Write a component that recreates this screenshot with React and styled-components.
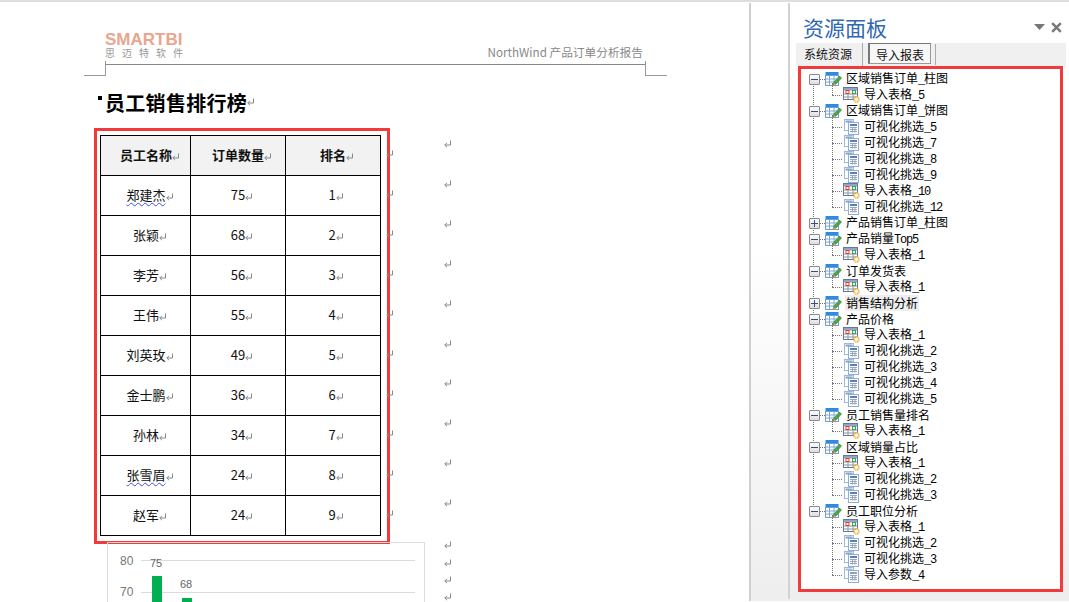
import React from 'react';
import styled, { createGlobalStyle } from 'styled-components';

const cjk = `"Noto Sans CJK SC", "Liberation Sans", sans-serif`;

const GlobalStyle = createGlobalStyle`
  html, body { margin: 0; padding: 0; background: #fff; overflow: hidden; }
  body { font-family: ${cjk}; }
`;

const Page = styled.div`
  width: 1069px;
  height: 602px;
  display: flex;
  overflow: hidden;
  box-sizing: border-box;
  padding-top: 3px;
  position: relative;
  &::before {
    content: '';
    position: absolute;
    left: 0;
    right: 0;
    top: 0;
    height: 2px;
    background: #dedede;
  }
`;

/* ---------- document side ---------- */
const Doc = styled.main`
  width: 749px;
  flex: none;
  background: #fff;
  padding: 27px 0 0 84px;
  box-sizing: border-box;
`;

const DocHeader = styled.header`
  width: 540px;
  margin-left: 21px;
  height: 34px;
  border-bottom: 1px solid #888;
  display: flex;
  justify-content: space-between;
  align-items: flex-end;
  position: relative;
`;

const CropMark = styled.i`
  position: absolute;
  top: 31px;
  ${(p) => (p.$side === 'left' ? 'left: -21px;' : 'right: -22px;')}
  width: 21px;
  height: 14px;
  border-bottom: 1px solid #999;
  ${(p) => (p.$side === 'left' ? 'border-right' : 'border-left')}: 1px solid #999;
`;

const Logo = styled.div`
  display: flex;
  flex-direction: column;
  margin-bottom: 6px;
`;

const LogoMark = styled.span`
  font-family: "Liberation Sans", sans-serif;
  font-size: 17px;
  line-height: 15px;
  font-weight: 700;
  letter-spacing: 0;
  color: #e9a58e;
`;

const LogoSub = styled.span`
  font-size: 10px;
  line-height: 11px;
  letter-spacing: 7px;
  color: #999;
  white-space: nowrap;
`;

const ReportName = styled.div`
  font-size: 11.7px;
  line-height: 14px;
  color: #888;
  margin-bottom: 5px;
  margin-right: 2px;
  white-space: nowrap;
`;

const Title = styled.h1`
  margin: 23px 0 0 14px;
  display: flex;
  align-items: center;
  height: 28px;
  font-size: 20px;
  letter-spacing: 0.3px;
  font-weight: 700;
  color: #000;
`;

const Bullet = styled.i`
  width: 4px;
  height: 4px;
  margin: -8px 3px 0 0;
  background: #000;
`;

const Body = styled.div`
  display: flex;
  margin: 12px 0 0 10px;
`;

const Report = styled.div`
  width: 296px;
  flex: none;
`;

const RedBox = styled.div`
  border: 3px solid #f33a3a;
  box-sizing: border-box;
`;

const TableBox = styled(RedBox)`
  width: 296px;
  height: 416px;
  padding: 4px 0 0 3px;
`;

const Table = styled.table`
  border-collapse: collapse;
  table-layout: fixed;
  width: 280px;
  font-size: 13px;
  color: #111;
`;

const Th = styled.th`
  height: 37px;
  padding: 0 0 2px ${(p) => p.$pad || 0}px;
  border: 1px solid #000;
  background: #f2f2f2;
  font-weight: 700;
  text-align: center;
  position: relative;
`;

const Td = styled.td`
  height: 37px;
  padding: 0 0 2px ${(p) => p.$pad || 0}px;
  border: 1px solid #000;
  text-align: center;
  position: relative;
`;

const Wavy = styled.span`
  text-decoration: ${(p) => (p.$wavy ? 'underline wavy #3f4fe0 1px' : 'none')};
  text-underline-offset: 2px;
`;

const RowEnd = styled.span`
  position: absolute;
  right: -14px;
  top: 50%;
  margin-top: -6px;
  display: flex;
`;

const MarkIcon = styled.svg`
  width: 8px;
  height: 8px;
  flex: none;
  vertical-align: -1px;
  color: #888;
`;

const ReturnMark = () => (
  <MarkIcon viewBox="0 0 8 8" fill="none" stroke="currentColor" strokeWidth="1">
    <path d="M6.5 0.5V5H0.8M3 2.8L0.8 5L3 7.2" />
  </MarkIcon>
);

const Marks = styled.div`
  margin: 12px 0 0 54px;
  display: flex;
  flex-direction: column;
`;

const MarkRow = styled.div`
  height: ${(p) => p.$h}px;
  display: flex;
  align-items: flex-start;
`;

const ChartFrame = styled.div`
  margin: -2px 0 0 13px;
  width: 316px;
  height: 70px;
  border: 1px solid #ddd;
  box-sizing: content-box;
`;

const Chart = () => (
  <svg width="316" height="70" viewBox="0 0 316 70" style={{ display: 'block' }}>
    <g stroke="#dcdcdc">
      <line x1="33" x2="307" y1="17.5" y2="17.5" />
      <line x1="33" x2="307" y1="49.5" y2="49.5" />
    </g>
    <g fontFamily="Liberation Sans, sans-serif" fontSize="12" fill="#777">
      <text x="12" y="22">80</text>
      <text x="12" y="53">70</text>
    </g>
    <g fontFamily="Liberation Sans, sans-serif" fontSize="11" fill="#666">
      <text x="42" y="24">75</text>
      <text x="72" y="45">68</text>
    </g>
    <rect x="44" y="33" width="10" height="40" fill="#00b050" />
    <rect x="74" y="55" width="10" height="20" fill="#00b050" />
  </svg>
);

/* ---------- resource panel ---------- */
const Dock = styled.aside`
  flex: 1;
  display: flex;
  border-left: 2px solid #cfcfcf;
  background: linear-gradient(#fff 0%, #fff 40%, #eee 100%);
  margin-bottom: 1px;
`;

const Panel = styled.section`
  margin-left: 37px;
  margin-bottom: 2px;
  flex: 1;
  display: flex;
  flex-direction: column;
  border-left: 2px solid #d2d2d2;
  padding: 8px 3px 0 6px;
`;

const PanelHead = styled.div`
  height: 32px;
  display: flex;
  align-items: center;
  padding: 0 4px 0 7px;
`;

const PanelTitle = styled.h2`
  flex: 1;
  margin: 0;
  font-size: 21px;
  font-weight: 400;
  line-height: 32px;
  color: #2f68b3;
`;

const PanelTool = styled.svg`
  display: block;
  margin-left: ${(p) => p.$gap || 0}px;
  color: #777;
`;

const Tabs = styled.div`
  height: 24px;
  display: flex;
  align-items: flex-start;
  background: #f0f0f0;
  font-size: 12px;
  color: #111;
`;

const Tab = styled.div`
  height: 21px;
  line-height: 22px;
  padding: 0 ${(p) => (p.$active ? '6px' : '10px')} 0 ${(p) => (p.$active ? '6px' : '8px')};
  box-sizing: border-box;
  margin-right: ${(p) => (p.$active ? '5px' : '6px')};
  position: relative;
  ${(p) => (p.$active
    ? `border: 1px solid #999; border-top-color: #777; border-left: 2px solid #777; background: #f7f7f7;`
    : '')}
  &::after {
    content: '';
    position: absolute;
    top: 0;
    bottom: -2px;
    right: ${(p) => (p.$active ? '-6px' : '-1px')};
    width: 1px;
    background: #aaa;
  }
`;

const TreeBox = styled(RedBox)`
  margin: -1px 3px 0 2px;
  height: 526px;
  background: #fff;
  padding-top: 2px;
  font-size: 12px;
  color: #000;
  overflow: hidden;
`;

const Node = styled.div`
  position: relative;
  &::before {
    content: '';
    display: ${(p) => (p.$last ? 'none' : 'block')};
    position: absolute;
    left: 12px;
    top: 8px;
    bottom: -8px;
    border-left: 1px dotted #777;
  }
`;

const RootRow = styled.div`
  height: 16px;
  display: flex;
  align-items: center;
  padding-left: 8px;
  white-space: nowrap;
`;

const Expander = styled.i`
  width: 9px;
  height: 9px;
  flex: none;
  border: 1px solid #8a8a8a;
  border-radius: 1px;
  box-sizing: content-box;
  background: linear-gradient(#fff, #ddd);
  position: relative;
  z-index: 1;
  &::before {
    content: '';
    position: absolute;
    left: 1px;
    right: 1px;
    top: 4px;
    height: 1px;
    background: #3b4f7c;
  }
  &::after {
    content: '';
    display: ${(p) => (p.$closed ? 'block' : 'none')};
    position: absolute;
    top: 1px;
    bottom: 1px;
    left: 4px;
    width: 1px;
    background: #3b4f7c;
  }
`;

const Dash = styled.i`
  width: 5px;
  flex: none;
  border-top: 1px dotted #777;
`;

const Children = styled.div`
  position: relative;
  &::before {
    content: '';
    position: absolute;
    left: 31px;
    top: -4px;
    bottom: 8px;
    border-left: 1px dotted #777;
  }
`;

const ChildRow = styled.div`
  height: 16px;
  display: flex;
  align-items: center;
  padding-left: 42px;
  white-space: nowrap;
  position: relative;
  &::before {
    content: '';
    position: absolute;
    left: 31px;
    width: 10px;
    top: 8px;
    border-top: 1px dotted #777;
  }
`;

const Label = styled.span`
  margin-left: ${(p) => p.$gap}px;
  padding: 0 1px;
  line-height: 16px;
  background: ${(p) => (p.$selected ? '#eee' : 'transparent')};
`;

const Latin = styled.span`
  font-family: "Liberation Mono", monospace;
  font-size: 12px;
  letter-spacing: -1.2px;
`;

const LabelText = ({ text }) =>
  text.split(/([A-Za-z0-9_]+)/).map((part, i) =>
    /^[A-Za-z0-9_]+$/.test(part) ? <Latin key={i}>{part}</Latin> : part
  );

const ReportIcon = () => (
  <svg width="17" height="16" viewBox="0 0 17 16" style={{ flex: 'none', display: 'block' }}>
    <rect x="0.5" y="1" width="13" height="4" fill="#2b8ae2" />
    <rect x="0.5" y="4.5" width="13" height="10" fill="#fff" stroke="#6f9fd6" />
    <path d="M4.5 5v9M9 5v9M1 8h12M1 11h12" stroke="#7fa6d2" fill="none" />
    <path d="M8 14.5l1-3.5 5.5-6 2 2-5.5 6z" fill="#4ea845" stroke="#2f7a2c" strokeWidth="0.6" />
    <path d="M8 15l.8-3 2.1 2z" fill="#e0a050" />
  </svg>
);

const ImportIcon = () => (
  <svg width="17" height="16" viewBox="0 0 17 16" style={{ flex: 'none', display: 'block' }}>
    <rect x="0.5" y="0.5" width="14" height="12" fill="#fff" stroke="#6a7890" />
    <rect x="1" y="1" width="13" height="2.5" fill="#8ea6cc" />
    <path d="M5 3v9M10 3v9M1 7h13M1 10h13" stroke="#8a96aa" fill="none" />
    <rect x="3" y="3.5" width="3" height="3" fill="#fff" stroke="#e04030" />
    <rect x="9.5" y="3.5" width="3" height="3" fill="#fff" stroke="#3fa648" />
    <circle cx="13.5" cy="12.5" r="2.6" fill="#fff3c8" stroke="#e8a020" strokeWidth="1.4" strokeDasharray="1.2 0.8" />
  </svg>
);

const SheetIcon = ({ tint = '#5b7fb5' }) => (
  <svg width="17" height="16" viewBox="0 0 17 16" style={{ flex: 'none', display: 'block' }}>
    <rect x="1.5" y="0.5" width="9" height="11" fill="#fff" stroke="#9bb8de" />
    <rect x="2.5" y="1.5" width="7" height="2" fill={tint} opacity="0.7" />
    <rect x="5.5" y="3.5" width="10" height="12" fill="#fff" stroke="#8eaedb" />
    <rect x="7" y="5" width="7" height="2" fill={tint} />
    <path d="M7 8.5h7M7 10.5h7M7 12.5h7M9.5 8v5.5M12 8v5.5" stroke="#9aa6b8" fill="none" />
  </svg>
);

const visual = (n) => ({ kind: 'sheet', name: `可视化挑选_${n}` });
const imported = (n) => ({ kind: 'import', name: `导入表格_${n}` });

const tree = [
  { name: '区域销售订单_柱图', items: [imported(5)] },
  {
    name: '区域销售订单_饼图',
    items: [visual(5), visual(7), visual(8), visual(9), imported(10), visual(12)],
  },
  { name: '产品销售订单_柱图', closed: true, items: [] },
  { name: '产品销量Top5', items: [imported(1)] },
  { name: '订单发货表', items: [imported(1)] },
  { name: '销售结构分析', closed: true, selected: true, items: [] },
  { name: '产品价格', items: [imported(1), visual(2), visual(3), visual(4), visual(5)] },
  { name: '员工销售量排名', items: [imported(1)] },
  { name: '区域销量占比', items: [imported(1), visual(2), visual(3)] },
  {
    name: '员工职位分析',
    items: [imported(1), visual(2), visual(3), { kind: 'param', name: '导入参数_4' }],
  },
];

const rows = [
  ['郑建杰', 75, 1, true],
  ['张颖', 68, 2],
  ['李芳', 56, 3],
  ['王伟', 55, 4],
  ['刘英玫', 49, 5],
  ['金士鹏', 36, 6],
  ['孙林', 34, 7],
  ['张雪眉', 24, 8, true],
  ['赵军', 24, 9],
];

const ChildIcon = ({ kind }) => {
  if (kind === 'import') return <ImportIcon />;
  if (kind === 'param') return <SheetIcon tint="#8fa0b8" />;
  return <SheetIcon />;
};

export default function App() {
  return (
    <Page>
      <GlobalStyle />
      <Doc>
        <DocHeader>
          <CropMark $side="left" />
          <Logo>
            <LogoMark>SMARTBI</LogoMark>
            <LogoSub>思迈特软件</LogoSub>
          </Logo>
          <ReportName>NorthWind 产品订单分析报告</ReportName>
          <CropMark $side="right" />
        </DocHeader>
        <Title>
          <Bullet />
          员工销售排行榜
          <ReturnMark />
        </Title>
        <Body>
          <Report>
            <TableBox>
              <Table>
                <colgroup>
                  <col width="90" />
                  <col width="95" />
                  <col width="95" />
                </colgroup>
                <thead>
                  <tr>
                    <Th $pad={9}>员工名称<ReturnMark /></Th>
                    <Th $pad={8}>订单数量<ReturnMark /></Th>
                    <Th $pad={8}>
                      排名<ReturnMark />
                      <RowEnd><ReturnMark /></RowEnd>
                    </Th>
                  </tr>
                </thead>
                <tbody>
                  {rows.map(([name, count, rank, wavy]) => (
                    <tr key={name}>
                      <Td $pad={9}><Wavy $wavy={wavy}>{name}</Wavy><ReturnMark /></Td>
                      <Td $pad={8}>{count}<ReturnMark /></Td>
                      <Td $pad={6}>
                        {rank}<ReturnMark />
                        <RowEnd><ReturnMark /></RowEnd>
                      </Td>
                    </tr>
                  ))}
                </tbody>
              </Table>
            </TableBox>
            <ChartFrame>
              <Chart />
            </ChartFrame>
          </Report>
          <Marks>
            {[40, 40, 40, 40, 40, 39, 40, 40, 40, 42, 18, 17, 17, 17].map((h, i) => (
              <MarkRow key={i} $h={h}><ReturnMark /></MarkRow>
            ))}
          </Marks>
        </Body>
      </Doc>
      <Dock>
        <Panel>
          <PanelHead>
            <PanelTitle>资源面板</PanelTitle>
            <PanelTool width="11" height="6" viewBox="0 0 11 6">
              <path d="M0 0h11L5.5 6z" fill="currentColor" />
            </PanelTool>
            <PanelTool $gap={6} width="11" height="11" viewBox="0 0 11 11">
              <path d="M1.2 1.2l8.6 8.6M9.8 1.2l-8.6 8.6" stroke="currentColor" strokeWidth="2.4" fill="none" />
            </PanelTool>
          </PanelHead>
          <Tabs>
            <Tab>系统资源</Tab>
            <Tab $active>导入报表</Tab>
          </Tabs>
          <TreeBox>
            {tree.map((node, i) => (
              <Node key={node.name} $last={i === tree.length - 1}>
                <RootRow>
                  <Expander $closed={node.closed} />
                  <Dash />
                  <ReportIcon />
                  <Label $gap={3} $selected={node.selected}><LabelText text={node.name} /></Label>
                </RootRow>
                {node.items.length > 0 && (
                  <Children>
                    {node.items.map((item, j) => (
                      <ChildRow key={j}>
                        <ChildIcon kind={item.kind} />
                        <Label $gap={3}><LabelText text={item.name} /></Label>
                      </ChildRow>
                    ))}
                  </Children>
                )}
              </Node>
            ))}
          </TreeBox>
        </Panel>
      </Dock>
    </Page>
  );
}
